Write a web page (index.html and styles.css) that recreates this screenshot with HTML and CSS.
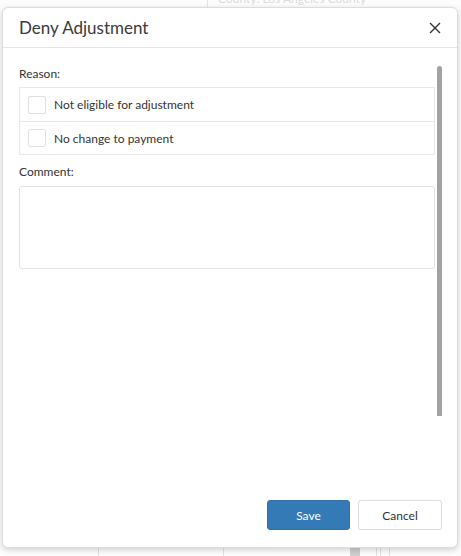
FILE: index.html
```html
<!DOCTYPE html>
<html lang="en">
<head>
<meta charset="utf-8">
<title>Deny Adjustment</title>
<link rel="stylesheet" href="styles.css">
</head>
<body>
  <div class="page">
    <div class="page-top">
      <div class="page-col"></div>
      <div class="page-meta">County: Los Angeles County</div>
    </div>
    <div class="page-bottom">
      <div class="cell c1"></div>
      <div class="cell c2"></div>
      <div class="cell c3"><span class="grip"></span></div>
      <div class="cell c4"></div>
      <div class="cell c5"></div>
    </div>
  </div>

  <div class="modal" role="dialog" aria-labelledby="modal-title">
    <header class="modal-header">
      <h1 id="modal-title" class="modal-title">Deny Adjustment</h1>
      <button class="close" aria-label="Close">
        <svg viewBox="0 0 12 12" width="12" height="12"><path d="M1 1 L11 11 M11 1 L1 11" stroke="#333" stroke-width="1.4" fill="none"/></svg>
      </button>
    </header>

    <div class="modal-body">
      <div class="field-label">Reason:</div>
      <ul class="reason-list">
        <li class="reason"><span class="checkbox"></span><span>Not eligible for adjustment</span></li>
        <li class="reason"><span class="checkbox"></span><span>No change to payment</span></li>
      </ul>
      <div class="field-label comment-label">Comment:</div>
      <div class="textarea"></div>
      <div class="scroll-thumb"></div>
    </div>

    <footer class="modal-footer">
      <button class="btn btn-primary">Save</button>
      <button class="btn btn-default">Cancel</button>
    </footer>
  </div>
</body>
</html>
```

FILE: styles.css
```css
* { box-sizing: border-box; }

html, body {
  margin: 0;
  height: 100%;
}

body {
  background: #ececec;
  font-family: Lato, "Open Sans", "Liberation Sans", sans-serif;
  color: #333;
  overflow: hidden;
  position: relative;
}

/* faint page behind the dialog */
.page {
  position: absolute;
  inset: 0;
  background: #fdfdfd;
}

.page-top {
  display: flex;
  height: 8px;
  padding-left: 207px;
}

.page-col {
  width: 1px;
  background: #e4e4e4;
}

.page-meta {
  margin-left: 10px;
  margin-top: -9px;
  font-size: 12px;
  line-height: 15px;
  color: #dadada;
}

.page-bottom {
  position: absolute;
  left: 0;
  right: 0;
  bottom: 0;
  height: 10px;
  display: flex;
}

.cell { border-left: 1px solid #e2e2e2; height: 100%; }
.c1 { margin-left: 98px; width: 125px; }
.c2 { width: 127px; }
.c3 { width: 26px; border-left: none; }
.c3 .grip { display: block; width: 10px; height: 100%; background: #cfcfcf; }
.c4 { width: 4px; }
.c5 { width: 10px; border-right: 1px solid #e2e2e2; }

/* dialog */
.modal {
  position: absolute;
  left: 2px;
  top: 7px;
  width: 456px;
  height: 541px;
  background: #fff;
  border: 1px solid #dcdcdc;
  border-radius: 6px;
  box-shadow: 0 2px 6px rgba(0, 0, 0, 0.18);
  display: flex;
  flex-direction: column;
}

.modal-header {
  height: 40px;
  flex: none;
  display: flex;
  align-items: center;
  justify-content: space-between;
  padding: 0 16px 0 16px;
  border-bottom: 1px solid #e5e5e5;
}

.modal-title {
  margin: 0;
  font-size: 17px;
  font-weight: 400;
  color: #3a3a3a;
}

.close {
  border: 0;
  background: none;
  padding: 0;
  width: 12px;
  height: 12px;
  margin-right: 0;
  display: flex;
}

.modal-body {
  flex: 1;
  position: relative;
  padding: 17px 22px 0 16px;
}

.field-label {
  font-size: 12px;
  line-height: 17px;
  color: #333;
}

.reason-list {
  list-style: none;
  margin: 5px 0 0;
  padding: 0;
  border: 1px solid #e8e8e8;
}

.reason {
  height: 33px;
  display: flex;
  align-items: center;
  gap: 8px;
  padding-left: 8px;
  font-size: 12px;
  color: #333;
}

.reason + .reason { border-top: 1px solid #e8e8e8; height: 33px; }

.checkbox {
  width: 18px;
  height: 18px;
  border: 1px solid #e0e0e0;
  border-radius: 2px;
  background: #fff;
}

.comment-label { margin-top: 8px; }

.textarea {
  margin-top: 6px;
  height: 83px;
  border: 1px solid #e2e2e2;
  border-radius: 3px;
}

.scroll-thumb {
  position: absolute;
  left: 434px;
  top: 18px;
  width: 5px;
  height: 350px;
  background: #a3a3a3;
  border-radius: 3px 3px 0 0;
}

.modal-footer {
  flex: none;
  display: flex;
  justify-content: flex-end;
  gap: 8px;
  padding: 0 15px 17px 0;
}

.btn {
  height: 30px;
  font-family: inherit;
  font-size: 12px;
  border-radius: 3px;
  cursor: pointer;
}

.btn-primary {
  width: 83px;
  background: #337ab7;
  border: 1px solid #2f72ad;
  color: #fff;
}

.btn-default {
  width: 84px;
  background: #fff;
  border: 1px solid #dcdcdc;
  color: #333;
}
```
